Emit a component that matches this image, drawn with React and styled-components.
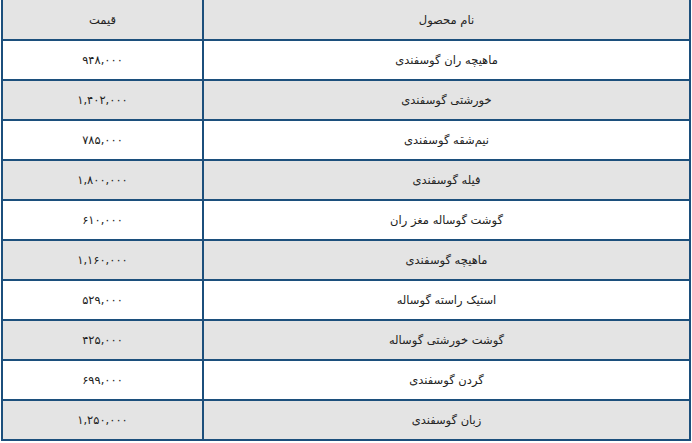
import React from 'react';
import styled, { createGlobalStyle } from 'styled-components';

const GlobalStyle = createGlobalStyle`
    html, body {
        margin: 0;
        padding: 0;
        background: #ffffff;
    }
`;

const Table = styled.table`
    direction: rtl;
    margin-left: 1px;
    width: 690px;
    border-collapse: separate;
    border-spacing: 0;
    table-layout: fixed;
    font-family: "DejaVu Sans", "Noto Sans", sans-serif;
    font-size: 11.5px;
    color: #222222;
`;

const Cell = styled.td`
    height: ${props => props.$head ? '39px' : '38px'};
    padding: 0;
    text-align: center;
    vertical-align: middle;
    background: ${props => props.$shaded ? '#e4e4e4' : '#ffffff'};
    border-bottom: 2px solid #1c4f7c;
    border-left: 2px solid #1c4f7c;
    &:first-child {
        border-right: 2px solid #1c4f7c;
    }
`;

const HeadCell = styled(Cell).attrs({ as: 'th', $head: true, $shaded: true })`
    font-weight: normal;
`;

const products = [
    { name: 'ماهیچه ران گوسفندی', price: '۹۴۸,۰۰۰' },
    { name: 'خورشتی گوسفندی', price: '۱,۴۰۲,۰۰۰' },
    { name: 'نیم‌شقه گوسفندی', price: '۷۸۵,۰۰۰' },
    { name: 'فیله گوسفندی', price: '۱,۸۰۰,۰۰۰' },
    { name: 'گوشت گوساله مغز ران', price: '۶۱۰,۰۰۰' },
    { name: 'ماهیچه گوسفندی', price: '۱,۱۶۰,۰۰۰' },
    { name: 'استیک راسته گوساله', price: '۵۲۹,۰۰۰' },
    { name: 'گوشت خورشتی گوساله', price: '۴۲۵,۰۰۰' },
    { name: 'گردن گوسفندی', price: '۶۹۹,۰۰۰' },
    { name: 'زبان گوسفندی', price: '۱,۲۵۰,۰۰۰' },
];

const App = () => (
    <>
        <GlobalStyle />
        <Table>
            <colgroup>
                <col style={{ width: '489px' }} />
                <col />
            </colgroup>
            <thead>
                <tr>
                    <HeadCell>نام محصول</HeadCell>
                    <HeadCell>قیمت</HeadCell>
                </tr>
            </thead>
            <tbody>
                {products.map((p, i) => (
                    <tr key={p.name}>
                        <Cell $shaded={i % 2 === 1}>{p.name}</Cell>
                        <Cell $shaded={i % 2 === 1}>{p.price}</Cell>
                    </tr>
                ))}
            </tbody>
        </Table>
    </>
);

export default App;
